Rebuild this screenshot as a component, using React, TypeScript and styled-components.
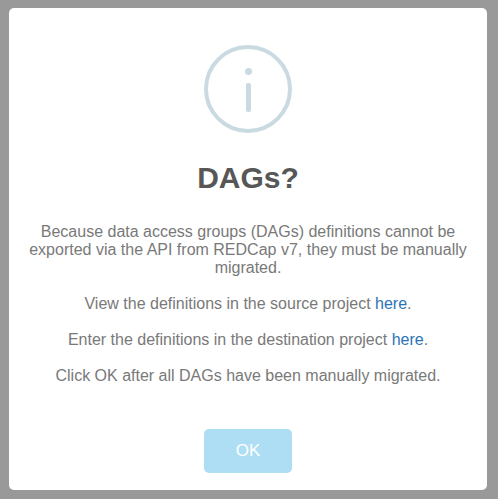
import React from "react";
import styled, { createGlobalStyle } from "styled-components";

const GlobalStyle = createGlobalStyle`
  body { margin: 0; background: #999; }
  * { box-sizing: border-box; }
`;

const Overlay = styled.div`
  height: 499px;
  padding: 8px 11px 9px 9px;
  background: #999;
  font-family: "Liberation Sans", Arial, Helvetica, sans-serif;
`;

const Modal = styled.section`
  height: 482px;
  padding: 37px 17px 17px;
  border-radius: 5px;
  background: #fff;
  display: flex;
  flex-direction: column;
  align-items: center;
`;

const InfoIcon = styled.svg`
  display: block;
  flex: none;
`;

const Title = styled.h2`
  margin: 25px 0 0;
  font-size: 30px;
  line-height: 40px;
  font-weight: 600;
  color: #575757;
`;

const Message = styled.div`
  margin-top: 25px;
  font-size: 16px;
  line-height: 18px;
  font-weight: 300;
  color: #797979;
  text-align: center;
`;

const Paragraph = styled.p`
  margin: 0 0 18px;
`;

const Link = styled.a`
  color: #2a73b5;
  text-decoration: none;
`;

const ConfirmButton = styled.button`
  margin-top: 26px;
  width: 88px;
  height: 44px;
  padding: 0;
  border: 0;
  border-radius: 5px;
  background: #aedef4;
  color: #fff;
  font: 500 17px "Liberation Sans", Arial, sans-serif;
`;

export default function App() {
  return (
    <Overlay>
      <GlobalStyle />
      <Modal role="dialog" aria-labelledby="title">
        <InfoIcon width="88" height="88" viewBox="0 0 88 88" aria-hidden="true">
          <circle cx="44" cy="44" r="42" fill="none" stroke="#c9dae1" strokeWidth="4" />
          <circle cx="44.5" cy="26.5" r="3.5" fill="#c9dae1" />
          <rect x="42" y="38" width="5" height="29" rx="2" fill="#c9dae1" />
        </InfoIcon>
        <Title id="title">DAGs?</Title>
        <Message>
          <Paragraph>
            Because data access groups (DAGs) definitions cannot be exported via the API from REDCap v7, they must be manually migrated.
          </Paragraph>
          <Paragraph>View the definitions in the source project <Link href="#source">here</Link>.</Paragraph>
          <Paragraph>Enter the definitions in the destination project <Link href="#destination">here</Link>.</Paragraph>
          <Paragraph>Click OK after all DAGs have been manually migrated.</Paragraph>
        </Message>
        <ConfirmButton type="button">OK</ConfirmButton>
      </Modal>
    </Overlay>
  );
}
